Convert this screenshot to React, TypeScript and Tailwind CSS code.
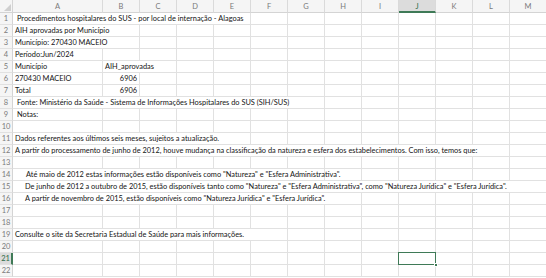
import React from "react";

type Cell = { text?: string; span?: number; align?: "left" | "right"; pl?: string };
type Row = Cell[];

const COLS = ["A", "B", "C", "D", "E", "F", "G", "H", "I", "J", "K", "L", "M"];

const rows: Row[] = [
  [{ text: "Procedimentos hospitalares do SUS - por local de internação - Alagoas", span: 5, pl: "pl-[4px]" }],
  [{ text: "AIH aprovadas por Município", span: 2 }],
  [{ text: "Município: 270430 MACEIO", span: 2 }],
  [{ text: "Período:Jun/2024", span: 1 }],
  [{ text: "Município", span: 1 }, { text: "AIH_aprovadas", span: 2 }],
  [{ text: "270430 MACEIO", span: 1 }, { text: "6906", span: 1, align: "right" }],
  [{ text: "Total", span: 1 }, { text: "6906", span: 1, align: "right" }],
  [{ text: "Fonte: Ministério da Saúde - Sistema de Informações Hospitalares do SUS (SIH/SUS)", span: 7, pl: "pl-[4px]" }],
  [{ text: "Notas:", span: 1, pl: "pl-[4px]" }],
  [],
  [{ text: "Dados referentes aos últimos seis meses, sujeitos a  atualização.", span: 5 }],
  [{ text: "A partir do processamento de junho de 2012, houve mudança na classificação da natureza e esfera dos estabelecimentos. Com isso, temos que:", span: 12 }],
  [],
  [{ text: "Até maio de 2012 estas informações estão disponíveis como \"Natureza\" e \"Esfera Administrativa\".", span: 7, pl: "pl-[13px]" }],
  [{ text: "De junho de 2012 a outubro de 2015, estão disponíveis tanto como \"Natureza\" e \"Esfera Administrativa\", como \"Natureza Jurídica\" e \"Esfera Jurídica\".", span: 13, pl: "pl-[12px]" }],
  [{ text: "A partir de novembro de 2015, estão disponíveis como \"Natureza Jurídica\" e \"Esfera Jurídica\".", span: 8, pl: "pl-[12px]" }],
  [],
  [],
  [{ text: "Consulte o site da Secretaria Estadual de Saúde para mais informações.", span: 6 }],
  [],
  [],
  [],
];

const GRID = "grid grid-cols-[13px_90px_repeat(12,37px)]";

function renderRow(row: Row, rIdx: number) {
  const cells: React.ReactNode[] = [];
  let used = 0;
  row.forEach((c, i) => {
    const span = c.span ?? 1;
    cells.push(
      <div
        key={"c" + i}
        className={`h-[12px] border-r border-b border-[#e1e1e1] whitespace-nowrap leading-[12px] text-[7.4px] text-[#141414] ${c.align === "right" ? "text-right pr-[2px]" : c.pl ?? "pl-[2px]"}`}
        style={{ gridColumn: `span ${span} / span ${span}` }}
      >
        {c.text}
      </div>
    );
    used += span;
  });
  for (let k = used; k < COLS.length; k++) {
    const isSel = rIdx === 20 && k === 9;
    cells.push(
      <div key={"e" + k} className="h-[12px] border-r border-b border-[#e1e1e1] relative">
        {isSel && (
          <div className="absolute -left-[1px] -top-[1px] w-[38px] h-[13px] border-[1.5px] border-[#3f7a57] z-10">
            <div className="absolute -right-[3px] -bottom-[3px] w-[4px] h-[4px] bg-[#3f7a57] border border-white" />
          </div>
        )}
      </div>
    );
  }
  const selRow = rIdx === 20;
  return (
    <div key={rIdx} className={GRID}>
      <div
        className={`h-[12px] border-b border-[#e1e1e1] text-[7.5px] leading-[12px] text-center ${
          selRow ? "bg-[#dcdcdc] text-[#2d6b47] border-r-2 border-r-[#3f7a57]" : "bg-[#f5f5f5] text-[#7a7a7a] border-r border-r-[#d4d4d4]"
        }`}
      >
        {rIdx + 1}
      </div>
      {cells}
    </div>
  );
}

export default function App() {
  return (
    <div
      className="w-[546px] h-[278px] overflow-hidden bg-white"
      style={{ fontFamily: "Lato, 'Noto Sans', sans-serif" }}
    >
      <div className={GRID}>
        <div className="h-[13px] bg-[#f5f5f5] border-r border-b border-[#d4d4d4] relative">
          <div className="absolute right-[1px] bottom-[1px] w-0 h-0 border-l-[7px] border-l-transparent border-b-[7px] border-b-[#cfcfcf]" />
        </div>
        {COLS.map((c, i) => (
          <div
            key={c}
            className={`h-[13px] text-[7.5px] leading-[13px] text-center border-r border-[#dadada] ${
              i === 9
                ? "bg-[#dcdcdc] text-[#2d6b47] border-b-2 border-b-[#3f7a57]"
                : "bg-[#f5f5f5] text-[#7a7a7a] border-b border-b-[#d4d4d4]"
            }`}
          >
            {c}
          </div>
        ))}
      </div>
      {rows.map((r, i) => renderRow(r, i))}
    </div>
  );
}
